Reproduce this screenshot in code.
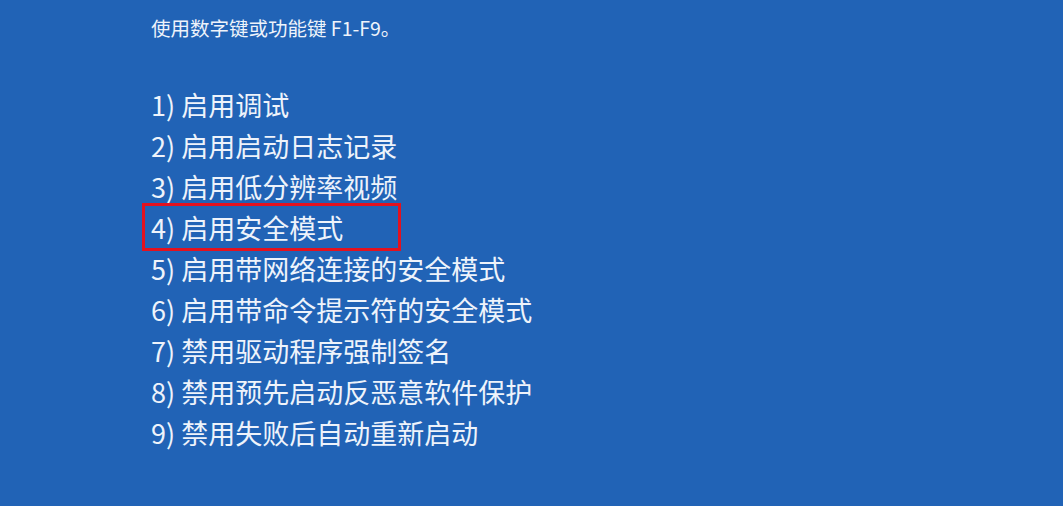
const items = [
  "1) 启用调试",
  "2) 启用启动日志记录",
  "3) 启用低分辨率视频",
  "4) 启用安全模式",
  "5) 启用带网络连接的安全模式",
  "6) 启用带命令提示符的安全模式",
  "7) 禁用驱动程序强制签名",
  "8) 禁用预先启动反恶意软件保护",
  "9) 禁用失败后自动重新启动",
];

export default function App() {
  return (
    <div
      className="w-[1063px] h-[506px] overflow-hidden bg-[#2163b6] text-[#eef3fb] pt-[16px] pl-[151px]"
      style={{ fontFamily: '"Noto Sans CJK SC", "Noto Sans", sans-serif' }}
    >
      <p className="text-[19.5px] leading-[24px]">使用数字键或功能键 F1-F9。</p>

      <ul className="mt-[44px]">
        {items.map((text, i) => (
          <li key={i} className="relative text-[27px] leading-[41px] whitespace-nowrap">
            {text}
            {i === 3 && (
              <span className="absolute left-[-9px] top-[-4px] w-[259px] h-[48px] border-[3px] border-[#e3121f]" />
            )}
          </li>
        ))}
      </ul>
    </div>
  );
}
